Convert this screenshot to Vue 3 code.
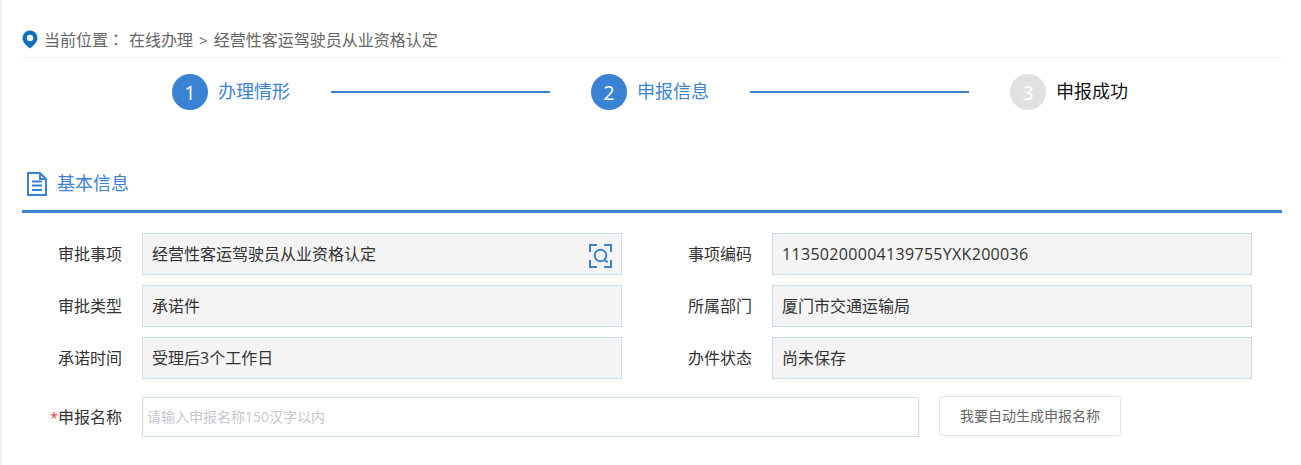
<script setup>
const steps = [
  { n: 1, label: '办理情形', state: 'done' },
  { n: 2, label: '申报信息', state: 'done' },
  { n: 3, label: '申报成功', state: 'todo' }
]
const rows = [
  [{ label: '审批事项', value: '经营性客运驾驶员从业资格认定', scan: true }, { label: '事项编码', value: '11350200004139755YXK200036', code: true }],
  [{ label: '审批类型', value: '承诺件' }, { label: '所属部门', value: '厦门市交通运输局' }],
  [{ label: '承诺时间', value: '受理后3个工作日' }, { label: '办件状态', value: '尚未保存' }]
]
</script>

<template>
  <div class="page">
    <div class="crumb">
      <svg class="pin" width="16" height="19" viewBox="0 0 16 19">
        <path fill-rule="evenodd" fill="#0f6fbd" d="M8 .5a7.5 7.5 0 0 1 7.5 7.5c0 3.9-3.4 7.3-7.5 10.5C3.900 15.300.5 11.900.5 8A7.500 7.500 0 0 1 8 .5zm0 4.300a3.200 3.200 0 1 0 0 6.400 3.200 3.200 0 0 0 0-6.400z" />
      </svg>
      <span class="c-head">当前位置<span class="colon">：</span></span>
      <span class="c-link">在线办理</span>
      <span class="c-sep">&gt;</span>
      <span>经营性客运驾驶员从业资格认定</span>
    </div>

    <div class="steps">
      <template v-for="(s, i) in steps" :key="s.n">
        <div class="step" :class="s.state">
          <span class="num">{{ s.n }}</span>
          <span class="lbl">{{ s.label }}</span>
        </div>
        <div v-if="i < 2" class="bar"></div>
      </template>
    </div>

    <div class="sec-title">
      <svg width="20" height="24" viewBox="0 0 20 24" fill="none" stroke="#3a82d4" stroke-width="2">
        <path d="M1 1h12l6 6v16H1z" />
        <path d="M13 1v6h6" />
        <path d="M5 9.500h10M5 13.500h10M5 18h10" />
      </svg>
      <span>基本信息</span>
    </div>

    <div class="form">
      <div v-for="(r, i) in rows" :key="i" class="row">
        <div v-for="f in r" :key="f.label" class="cell">
          <label class="lab">{{ f.label }}</label>
          <div class="val">
            <span :class="{ code: f.code }">{{ f.value }}</span>
            <svg v-if="f.scan" class="scan" width="23" height="24" viewBox="0 0 23 24" fill="none" stroke="#3a82d4">
              <path stroke-width="2" d="M1 8V1h7M15 1h7v7M22 16v7h-7M8 23H1v-7" />
              <circle cx="11.500" cy="11.500" r="5.800" stroke-width="2" />
              <path stroke-width="2" d="M15.500 15.500l3 3" />
            </svg>
          </div>
        </div>
      </div>
      <div class="row name-row">
        <label class="lab"><i>*</i>申报名称</label>
        <input class="name" type="text" placeholder="请输入申报名称150汉字以内" />
        <button class="auto" type="button">我要自动生成申报名称</button>
      </div>
    </div>
  </div>
</template>

<style scoped>
.page {
  box-sizing: border-box;
  width: 1301px;
  height: 465px;
  overflow: hidden;
  padding: 0 19px 0 20px;
  border-left: 2px solid #f0f0f0;
  background: #fff;
  font-family: "Open Sans", "Noto Sans CJK SC", sans-serif;
  color: #333;
}
.crumb {
  box-sizing: border-box;
  height: 58px;
  padding-top: 28px;
  padding-bottom: 6px;
  border-bottom: 1px solid #f0f0f0;
  display: flex;
  align-items: center;
  font-size: 16px;
  line-height: 22px;
  color: #666;
}
.pin { margin-right: 6px; }
.colon { font-family: "Noto Sans CJK TC", sans-serif; }
.c-head { margin-right: 5px; }
.c-sep { margin: 0 6px; font-size: 15px; }
.steps {
  display: flex;
  align-items: center;
  height: 36px;
  margin-top: 16px;
  padding-left: 150px;
}
.step {
  display: flex;
  align-items: center;
  width: 159px;
}
.num {
  width: 36px;
  height: 36px;
  border-radius: 50%;
  background: #3a82d4;
  color: #fff;
  font-size: 20px;
  display: flex;
  align-items: center;
  justify-content: center;
  margin-right: 10px;
}
.lbl {
  font-size: 18px;
  line-height: 34px;
  color: #3a82d4;
  margin-top: -3px;
}
.todo .num { background: #e1e1e1; }
.todo .lbl { color: #111; }
.bar {
  width: 219px;
  height: 2px;
  background: #3a82d4;
  margin-right: 41px;
}
.sec-title {
  box-sizing: border-box;
  height: 103px;
  padding: 60px 0 0 5px;
  border-bottom: 3px solid #3a82d4;
  display: flex;
  align-items: flex-start;
  gap: 10px;
  color: #3a82d4;
  font-size: 18px;
  line-height: 26px;
}
.sec-title svg { margin-top: 2px; }
.form {
  padding-top: 20px;
}
.row {
  display: flex;
  margin-bottom: 10px;
}
.cell {
  display: flex;
  align-items: center;
}
.cell + .cell .lab { width: 80px; margin-left: 50px; }
.lab {
  width: 100px;
  flex: none;
  box-sizing: border-box;
  margin-right: 20px;
  margin-top: -2px;
  text-align: right;
  font-size: 16px;
  color: #333;
}
.lab i { font-style: normal; font-size: 14px; color: #e2383a; }
.val {
  box-sizing: border-box;
  width: 480px;
  height: 42px;
  padding: 0 9px;
  border: 1px solid #c9dff0;
  background: #f4f4f4;
  display: flex;
  align-items: center;
  justify-content: space-between;
  font-size: 16px;
  line-height: 38px;
  color: #333;
}
.code { letter-spacing: 0.31px; }
.scan { margin-top: 4px; }
.name-row {
  align-items: center;
  margin-top: 18px;
}
.name {
  box-sizing: border-box;
  width: 777px;
  height: 40px;
  padding: 0 4px 1px;
  border: 1px solid #c9dff0;
  outline: none;
  font-family: inherit;
  font-size: 14px;
}
.name::placeholder { color: #c4c7cf; }
.auto {
  box-sizing: border-box;
  align-self: flex-start;
  width: 182px;
  height: 40px;
  margin: -1px 0 0 20px;
  border: 1px solid #e3e3e3;
  border-radius: 4px;
  background: #fff;
  color: #666;
  font-family: inherit;
  font-size: 14px;
  padding: 0 0 2px;
}
</style>
